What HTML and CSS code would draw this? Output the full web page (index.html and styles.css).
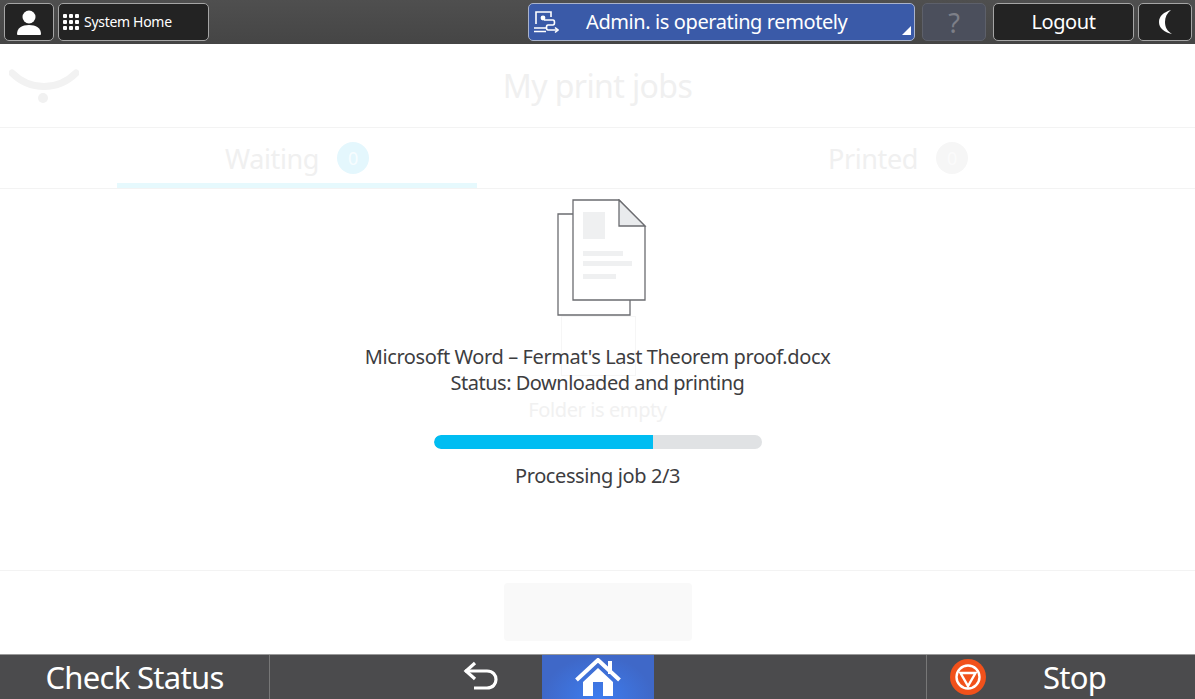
FILE: index.html
```html
<!DOCTYPE html>
<html lang="en">
<head>
  <meta charset="UTF-8">
  <meta name="viewport" content="width=device-width, initial-scale=1.0">
  <title>My print jobs</title>
  <link rel="stylesheet" href="styles.css">
</head>
<body>
  <header class="top-bar">
    <button class="top-btn user-btn">
      <svg width="26" height="28" viewBox="0 0 26 28"><circle cx="13" cy="9" r="6.5" fill="#fff"/><path d="M1 26c0-6 5-9 12-9s12 3 12 9c0 1-1 1-2 1H3c-1 0-2 0-2-1z" fill="#fff"/></svg>
    </button>
    <button class="top-btn home-btn">
      <span class="dots"><i></i><i></i><i></i><i></i><i></i><i></i><i></i><i></i><i></i></span>
      <span>System Home</span>
    </button>
    <button class="remote-btn">
      <svg class="remote-icon" width="26" height="24" viewBox="0 0 26 24" fill="none" stroke="#fff" stroke-width="1.6"><path d="M3 14V2h15v5"/><circle cx="10" cy="8" r="2.4" fill="#fff" stroke="none"/><path d="M1 18h12M1 21.5h12"/><path d="M11 10h9c2 0 2 5 0 5h-5c-2 0-2 5 0 5h9"/><path d="M22 17.500l3 2.500-3 2.500"/></svg>
      <span>Admin. is operating remotely</span>
      <span class="corner"></span>
    </button>
    <button class="help-btn">?</button>
    <button class="top-btn logout-btn">Logout</button>
    <button class="top-btn moon-btn">
      <svg width="18" height="26" viewBox="0 0 18 26"><path d="M15 1C8 3 3 7 3 13s5 10 13 12c-5-3-7-7-7-12s2-9 6-12z" fill="#fff"/></svg>
    </button>
  </header>

  <main class="content">
    <div class="faded-page">
      <div class="title-row">
        <svg class="wifi" width="70" height="40" viewBox="0 0 70 40"><path d="M3 7c18 18 46 18 64 0" fill="none" stroke="#f2f2f2" stroke-width="7" stroke-linecap="round"/><circle cx="34" cy="32" r="5" fill="#f1f1f1"/></svg>
        <h1>My print jobs</h1>
      </div>
      <div class="tabs">
        <div class="tab tab-active">
          <span>Waiting</span><span class="count count-blue">0</span>
        </div>
        <div class="tab">
          <span>Printed</span><span class="count">0</span>
        </div>
      </div>
    </div>

    <section class="job">
      <svg class="doc" width="90" height="118" viewBox="0 0 90 118">
        <path d="M16 15H1v101h72v-15" fill="#fff" stroke="#6b6c70" stroke-width="1.300"/>
        <path d="M16 1h46l26 26v74H16z" fill="#fff" stroke="#6b6c70" stroke-width="1.300"/>
        <path d="M62 1l26 26H62z" fill="#e9ebed" stroke="#6b6c70" stroke-width="1.300"/>
        <rect x="26" y="13" width="22" height="27" fill="#eff0f1"/>
        <rect x="26" y="52" width="40" height="5" fill="#eff0f1"/>
        <rect x="26" y="62" width="49" height="5" fill="#eff0f1"/>
        <rect x="26" y="75" width="33" height="5" fill="#eff0f1"/>
      </svg>
      <div class="ghost-box"></div>
      <div class="job-name">Microsoft Word – Fermat's Last Theorem proof.docx</div>
      <div class="job-status">Status: Downloaded and printing</div>
      <div class="ghost-text">Folder is empty</div>
      <div class="progress"><div class="progress-fill" style="width: 67%"></div></div>
      <div class="job-count">Processing job 2/3</div>
    </section>

    <div class="action-row">
      <div class="ghost-btn"></div>
    </div>
  </main>

  <footer class="bottom-bar">
    <div class="check-status">Check Status</div>
    <div class="nav">
      <button class="nav-btn">
        <svg width="38" height="32" viewBox="0 0 38 32" fill="none" stroke="#fff" stroke-width="3.200"><path d="M3 10h22c12 0 12 17 0 17H12"/><path d="M13 2L4 10l9 8" stroke-linejoin="miter"/></svg>
      </button>
      <button class="nav-btn nav-home">
        <svg width="46" height="38" viewBox="0 0 46 38"><path d="M1.500 22L23 2l21.500 20" fill="none" stroke="#fff" stroke-width="4"/><path d="M33 3h4v13h-4z" fill="#fff"/><path fill-rule="evenodd" d="M8 24L23 10l15 14v14H8zm10 0v14h10V24z" fill="#fff"/><path d="M20 26h6v12h-6z" fill="#3f6fd8" opacity="0"/></svg>
      </button>
    </div>
    <div class="stop">
      <svg class="stop-icon" width="36" height="36" viewBox="0 0 36 36"><circle cx="18" cy="18" r="18" fill="#f1511b"/><circle cx="18" cy="18" r="11.500" fill="none" stroke="#fff" stroke-width="2.400"/><path d="M10.500 14h15L18 27z" fill="none" stroke="#fff" stroke-width="2.400"/></svg>
      <span>Stop</span>
    </div>
  </footer>
</body>
</html>
```
FILE: styles.css
```css
* {
  box-sizing: border-box;
}

html, body {
  height: 100%;
}

body {
  margin: 0;
  font-family: 'Noto Sans', 'DejaVu Sans', sans-serif;
  background: #fff;
  display: flex;
  flex-direction: column;
  overflow: hidden;
}

button {
  font-family: inherit;
  padding: 0;
  cursor: pointer;
}

.top-bar {
  height: 44px;
  flex: none;
  display: flex;
  align-items: center;
  padding: 2px 1px 3px 4px;
  background: linear-gradient(#4f4f4f, #454545);
}

.top-btn {
  height: 38px;
  background: #232323;
  border: 1px solid #a5a5a5;
  border-radius: 5px;
  color: #fff;
  display: flex;
  align-items: center;
  justify-content: center;
}

.user-btn {
  width: 50px;
}

.home-btn {
  width: 151px;
  margin-left: 4px;
  padding-left: 4px;
  justify-content: flex-start;
  gap: 5px;
  font-size: 14px;
  letter-spacing: -0.3px;
}

.dots {
  display: grid;
  grid-template-columns: repeat(3, 4px);
  gap: 2px;
}

.dots i {
  width: 4px;
  height: 4px;
  background: #fff;
  border-radius: 1px;
}

.remote-btn {
  width: 387px;
  height: 38px;
  margin-left: 319px;
  position: relative;
  display: flex;
  align-items: center;
  background: #3a5aa8;
  border: 1px solid #a9b3cc;
  border-radius: 5px;
  color: #fff;
  font-size: 20px;
  letter-spacing: -0.4px;
}

.remote-icon {
  margin-left: 4px;
  margin-right: 27px;
}

.corner {
  position: absolute;
  right: 3px;
  bottom: 5px;
  width: 0;
  height: 0;
  border-left: 9px solid transparent;
  border-bottom: 9px solid #fff;
}

.help-btn {
  width: 64px;
  height: 38px;
  margin-left: 7px;
  background: #4b4f5c;
  border: 1px solid #5d606a;
  border-radius: 5px;
  color: #7d7f88;
  font-size: 27px;
}

.logout-btn {
  width: 141px;
  margin-left: 7px;
  font-size: 20px;
  letter-spacing: -0.4px;
}

.moon-btn {
  width: 54px;
  margin-left: 4px;
}

.content {
  flex: 1;
  position: relative;
  display: flex;
  flex-direction: column;
  min-height: 0;
}

.title-row {
  height: 84px;
  position: relative;
  display: flex;
  align-items: center;
  justify-content: center;
  border-bottom: 1px solid #f3f3f3;
}

.wifi {
  position: absolute;
  left: 9px;
  top: 22px;
}

h1 {
  margin: 0;
  font-size: 32px;
  font-weight: 400;
  color: #f0f0f0;
  letter-spacing: -0.6px;
}

.tabs {
  height: 61px;
  display: grid;
  grid-template-columns: 1fr 1fr;
  border-bottom: 1px solid #f3f3f3;
  padding: 0 117px;
  gap: 0 241px;
}

.tab {
  display: flex;
  align-items: center;
  justify-content: center;
  gap: 18px;
  font-size: 27px;
  color: #f0f0f0;
  letter-spacing: -0.4px;
  height: 60px;
}

.tab-active {
  border-bottom: 5px solid #e6f9fd;
  padding-top: 5px;
}

.count {
  width: 32px;
  height: 32px;
  border-radius: 50%;
  background: #f6f6f6;
  color: #fbfbfb;
  font-size: 18px;
  display: flex;
  align-items: center;
  justify-content: center;
}

.count-blue {
  background: #e4f7fd;
  color: #f7fdff;
}

.job {
  flex: 1;
  display: flex;
  flex-direction: column;
  align-items: center;
  position: relative;
  padding-top: 10px;
  border-bottom: 1px solid #f3f3f3;
  color: #3d3d3f;
}

.doc {
  margin-left: 8px;
  flex: none;
  position: relative;
  z-index: 1;
}

.ghost-box {
  position: absolute;
  top: 127px;
  left: 561px;
  width: 75px;
  height: 60px;
  border: 1px solid #f6f6f6;
  border-top-width: 1px;
}

.job-name {
  margin-top: 26px;
  font-size: 20px;
  line-height: 27px;
  letter-spacing: -0.4px;
  position: relative;
}

.job-status {
  font-size: 20px;
  line-height: 26px;
  letter-spacing: -0.5px;
  position: relative;
}

.ghost-text {
  font-size: 20px;
  line-height: 28px;
  color: #f1f1f1;
  letter-spacing: -0.4px;
}

.progress {
  width: 328px;
  height: 14px;
  margin-top: 11px;
  border-radius: 7px;
  background: #e0e2e4;
  overflow: hidden;
}

.progress-fill {
  height: 100%;
  background: #00bdf2;
  border-radius: 7px 0 0 7px;
}

.job-count {
  margin-top: 13px;
  font-size: 20px;
  line-height: 27px;
  letter-spacing: -0.4px;
}

.action-row {
  height: 83px;
  flex: none;
  display: flex;
  justify-content: center;
  padding-top: 12px;
}

.ghost-btn {
  width: 188px;
  height: 58px;
  background: #f9f9f9;
  border-radius: 4px;
}

.bottom-bar {
  height: 45px;
  flex: none;
  display: flex;
  background: #4b4b4d;
  border-top: 1px solid #9a9a9a;
  color: #fff;
}

.check-status {
  width: 270px;
  border-right: 1px solid #777;
  display: flex;
  align-items: center;
  justify-content: center;
  font-size: 31px;
  letter-spacing: -0.7px;
}

.nav {
  flex: 1;
  display: flex;
  padding-left: 149px;
}

.nav-btn {
  width: 123px;
  height: 44px;
  background: none;
  border: none;
  display: flex;
  align-items: center;
  justify-content: center;
}

.nav-home {
  width: 112px;
  background: radial-gradient(ellipse at 50% 100%, #3d7df0, #3f68c8 70%);
}

.stop {
  width: 269px;
  border-left: 1px solid #777;
  display: flex;
  align-items: center;
  padding-left: 23px;
  font-size: 31px;
  letter-spacing: -0.7px;
}

.stop span {
  margin-left: 57px;
}
```
